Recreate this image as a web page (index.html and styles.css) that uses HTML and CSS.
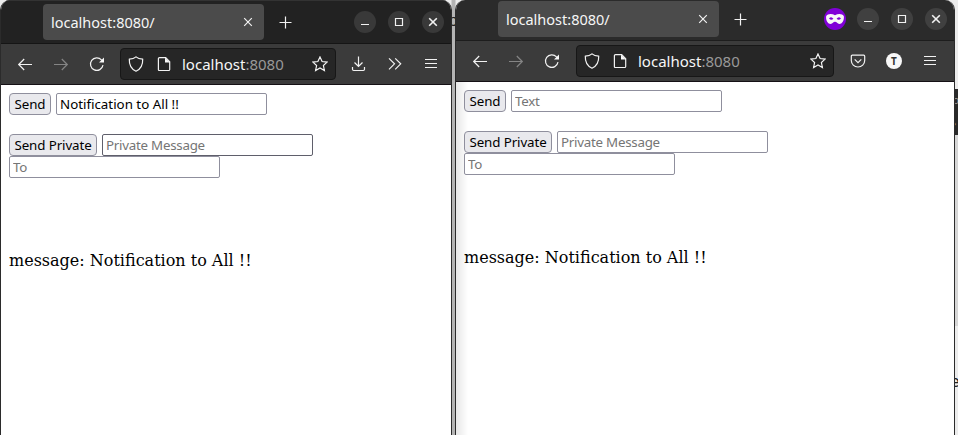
FILE: index.html
```html
<!DOCTYPE html>
<html lang="en">
<head>
<meta charset="utf-8">
<title>localhost:8080</title>
<link rel="stylesheet" href="styles.css">
</head>
<body>
<svg class="defs" width="0" height="0">
  <symbol id="back" viewBox="0 0 16 16"><path d="M15 8.500H1.500M7.200 3 1.700 8.500l5.500 5.500"/></symbol>
  <symbol id="forward" viewBox="0 0 16 16"><path d="M1 8.500h13.500M8.800 3l5.500 5.500-5.500 5.500"/></symbol>
  <symbol id="reload" viewBox="0 0 16 16"><path d="M14 9.200A6.300 6.300 0 1 1 12.500 3.900L13.700 5"/><path class="solid" d="M15 1.500v5H10z"/></symbol>
  <symbol id="shield" viewBox="0 0 16 16"><path d="M8 .9C6.300 2.300 3.800 3 1.300 3.200 1.100 8.500 3.200 13 8 15.200c4.800-2.200 6.900-6.700 6.700-12C12.200 3 9.700 2.300 8 .9z"/></symbol>
  <symbol id="page" viewBox="0 0 16 16"><path d="M3.500 1.700h6.200l4 4v7.700q0 1.100-1.100 1.100H3.500q-1.100 0-1.100-1.100V2.800q0-1.100 1.100-1.100z"/><path class="solid" d="M9 1.500 14 6.500H9z"/></symbol>
  <symbol id="star" viewBox="0 0 16 16"><path d="M8 .9l2.100 4.600 5 .6-3.700 3.400 1 5L8 12l-4.400 2.500 1-5L.9 6.100l5-.6z"/></symbol>
  <symbol id="download" viewBox="0 0 16 16"><path d="M7.500 .5v10M3.500 6.500l4 4 4-4M1.500 11v2.300q0 1.200 1.200 1.200h9.600q1.200 0 1.200-1.200V11"/></symbol>
  <symbol id="more" viewBox="0 0 16 16"><path d="m2 2.300 5.500 5.500L2 13.300M8.200 2.300l5.500 5.500-5.500 5.500"/></symbol>
  <symbol id="menu" viewBox="0 0 16 16"><path d="M2 3.500h12M2 7.500h12M2 11.500h12"/></symbol>
  <symbol id="close" viewBox="0 0 16 16"><path d="m4.200 4.200 7.600 7.600m0-7.600-7.600 7.600"/></symbol>
  <symbol id="plus" viewBox="0 0 16 16"><path d="M7.500 2.500v12M1.500 8.500h12"/></symbol>
  <symbol id="minimize" viewBox="0 0 16 16"><path d="M4 10.500h8"/></symbol>
  <symbol id="maximize" viewBox="0 0 16 16"><path d="M4.500 4.500h7v7h-7z"/></symbol>
  <symbol id="pocket" viewBox="0 0 16 16"><path d="M2.300 2.200h11.400q1 0 1 1v4.300a6.700 6.500 0 0 1-13.400 0V3.200q0-1 1-1z"/><path d="m4.700 6.400 3.300 3.200 3.300-3.200"/></symbol>
  <symbol id="mask" viewBox="0 0 22 22"><path class="solid" fill-rule="evenodd" d="M2.200 8C3.500 5.500 8 5.200 11 7.200c3-2 7.500-1.700 8.800.8.600 3.400-1 8-4.500 8-2 0-2.500-2.200-4.300-2.200S8.700 16 6.700 16c-3.500 0-5.100-4.600-4.500-8zM5 10.400q2.300-2.600 4.400.3-2.200 2-4.400-.3zm7.600.3q2.100-2.900 4.400-.3-2.200 2.300-4.400.3z"/></symbol>
</svg>

<div class="behind">
  <span class="scrap scrap-top">p</span>
  <div class="dark-panel"><i>o</i><i>›</i></div>
  <div class="grey-panel"></div>
  <span class="scrap scrap-side">e</span>
</div>

<section class="window window-left">
  <header class="titlebar">
    <div class="tab"><span class="tab-title">localhost:8080/</span><svg class="icon"><use href="#close"/></svg></div>
    <svg class="icon new-tab"><use href="#plus"/></svg>
    <div class="controls">
      <span class="control"><svg class="icon"><use href="#minimize"/></svg></span>
      <span class="control"><svg class="icon"><use href="#maximize"/></svg></span>
      <span class="control"><svg class="icon bold"><use href="#close"/></svg></span>
    </div>
  </header>
  <nav class="toolbar">
    <div class="nav-icons"><svg class="icon"><use href="#back"/></svg><svg class="icon dim"><use href="#forward"/></svg><svg class="icon"><use href="#reload"/></svg></div>
    <div class="urlbar"><svg class="icon"><use href="#shield"/></svg><svg class="icon"><use href="#page"/></svg><span class="url">localhost<em>:8080</em></span><svg class="icon"><use href="#star"/></svg></div>
    <div class="tools"><svg class="icon"><use href="#download"/></svg><svg class="icon"><use href="#more"/></svg><svg class="icon"><use href="#menu"/></svg></div>
  </nav>
  <main class="page">
    <div class="row first"><button class="send">Send</button><input type="text" value="Notification to All !!"></div>
    <div class="row"><button class="private">Send Private</button><input class="hovered" type="text" placeholder="Private Message"></div>
    <div class="row"><input type="text" placeholder="To"></div>
    <p class="message">message: Notification to All !!</p>
  </main>
</section>

<section class="window window-right">
  <header class="titlebar">
    <div class="tab"><span class="tab-title">localhost:8080/</span><svg class="icon"><use href="#close"/></svg></div>
    <svg class="icon new-tab"><use href="#plus"/></svg>
    <div class="controls">
      <span class="control incognito"><svg class="mask"><use href="#mask"/></svg></span>
      <span class="control"><svg class="icon"><use href="#minimize"/></svg></span>
      <span class="control"><svg class="icon"><use href="#maximize"/></svg></span>
      <span class="control"><svg class="icon bold"><use href="#close"/></svg></span>
    </div>
  </header>
  <nav class="toolbar">
    <div class="nav-icons"><svg class="icon"><use href="#back"/></svg><svg class="icon dim"><use href="#forward"/></svg><svg class="icon"><use href="#reload"/></svg></div>
    <div class="urlbar"><svg class="icon"><use href="#shield"/></svg><svg class="icon"><use href="#page"/></svg><span class="url">localhost<em>:8080</em></span><svg class="icon"><use href="#star"/></svg></div>
    <div class="tools"><svg class="icon"><use href="#pocket"/></svg><span class="avatar">T</span><svg class="icon"><use href="#menu"/></svg></div>
  </nav>
  <main class="page">
    <div class="row first"><button class="send">Send</button><input type="text" placeholder="Text"></div>
    <div class="row"><button class="private">Send Private</button><input type="text" placeholder="Private Message"></div>
    <div class="row"><input type="text" placeholder="To"></div>
    <p class="message">message: Notification to All !!</p>
  </main>
</section>
</body>
</html>
```

FILE: styles.css
```css
* { box-sizing: border-box; }
body {
  margin: 0;
  width: 958px;
  height: 435px;
  overflow: hidden;
  position: relative;
  background: #ececec;
  font-family: "Noto Sans", "Open Sans", sans-serif;
}
.defs { position: absolute; }

.behind { position: absolute; inset: 0; overflow: hidden; background: linear-gradient(90deg, #ececec 451px, #b4b4b4 452px, #b4b4b4 455px, #ececec 456px); }
.scrap { position: absolute; font: 16px/20px "DejaVu Sans", sans-serif; color: #222; }
.scrap-top { left: 448px; top: 11px; }
.scrap-side { left: 950px; top: 372px; }
.dark-panel { position: absolute; left: 950px; top: 89px; width: 8px; height: 46px; background: #292929; color: #999; font-size: 10px; line-height: 23px; }
.dark-panel i { display: block; padding-left: 3px; font-style: normal; }
.grey-panel { position: absolute; left: 950px; top: 135px; width: 8px; height: 191px; background: #d6d6d6; }

.window {
  position: absolute;
  top: 0;
  height: 435px;
  display: flex;
  flex-direction: column;
  border: solid #2b2b2b;
  border-width: 0 1px;
  border-radius: 10px 10px 0 0;
  overflow: hidden;
  background: #fff;
}
.window-left { left: 0; width: 452px; }
.window-right { left: 455px; width: 500px; }

.titlebar {
  display: flex;
  align-items: center;
  height: 44px;
  flex: none;
  padding: 0 7px 0 42px;
  background: #222;
  border-top: 1px solid #333;
  border-bottom: 1px solid #151515;
}
.window-right .titlebar { height: 41px; padding-bottom: 2px; background: #2b2b2b; border-top: 0; border-bottom-color: #1d1d1d; }
.tab {
  display: flex;
  align-items: center;
  justify-content: space-between;
  width: 221px;
  height: 36px;
  padding: 0 8px;
  border-radius: 4px;
  background: #4b4b4b;
  color: #f6f6f6;
}
.tab-title { width: 110px; font-size: 14.5px; white-space: nowrap; }
.icon { display: block; flex: none; width: 16px; height: 16px; fill: none; stroke: #f2f2f2; stroke-width: 1.2; }
.solid { fill: #f8f8f8; stroke: none; }
.dim { stroke: #858585; }
.bold { stroke-width: 1.6; }
.new-tab { margin-left: 14px; }
.controls { display: flex; gap: 12px; margin-left: auto; }
.control { display: grid; place-items: center; width: 22px; height: 22px; border-radius: 50%; background: #393939; }
.window-right .control { background: #404040; }
.window-right .incognito { background: #8000d7; margin-right: -1px; }
.mask { width: 22px; height: 22px; }

.toolbar {
  display: flex;
  align-items: center;
  height: 41px;
  flex: none;
  padding: 0 12px 0 16px;
  background: #3b3b3b;
  border-bottom: 1px solid #151015;
}
.nav-icons { display: flex; gap: 20px; width: 103px; }
.window-right .nav-icons { width: 104px; }
.urlbar {
  display: flex;
  align-items: center;
  flex: 1;
  height: 32px;
  padding: 0 7px;
  border: 1px solid #171717;
  border-radius: 4px;
  background: #262626;
}
.urlbar .icon + .icon { margin-left: 12px; }
.url { flex: 1; margin-left: 10px; color: #f6f6f6; font-size: 15px; white-space: nowrap; }
.url em { color: #999; font-style: normal; }
.tools { display: flex; gap: 20px; margin-left: 15px; }
.window-right .tools { margin-left: 16px; }
.window-right .toolbar { padding-right: 16px; }
.avatar { display: grid; place-items: center; width: 16px; height: 16px; border-radius: 50%; background: #f8f8f8; color: #333; font-size: 10px; font-weight: 700; line-height: 16px; }

.page { flex: 1; padding: 8px; }
.window-right .page { background: linear-gradient(90deg, #e7e7e7, #fff 12px); }
.row { display: flex; gap: 5px; height: 22px; }
.row.first { margin-bottom: 19px; }
button, input {
  height: 22px;
  margin: 0;
  font: 13.333px/18px "Noto Sans", "Open Sans", sans-serif;
  border: 1px solid #8f8f9d;
  color: #000;
}
button { padding: 0; border-radius: 4px; background: #e9e9ed; white-space: nowrap; letter-spacing: -.1px; }
.send { width: 42px; }
.private { width: 88px; }
input { width: 211px; padding: 0 3px; border-radius: 2px; background: #fff; }
input::placeholder { color: #757575; opacity: 1; letter-spacing: -.25px; }
.hovered { border-color: #5f5f6b; }
.message { margin: 73px 0 0; font: 16px/20px "DejaVu Serif", serif; color: #000; }
```
